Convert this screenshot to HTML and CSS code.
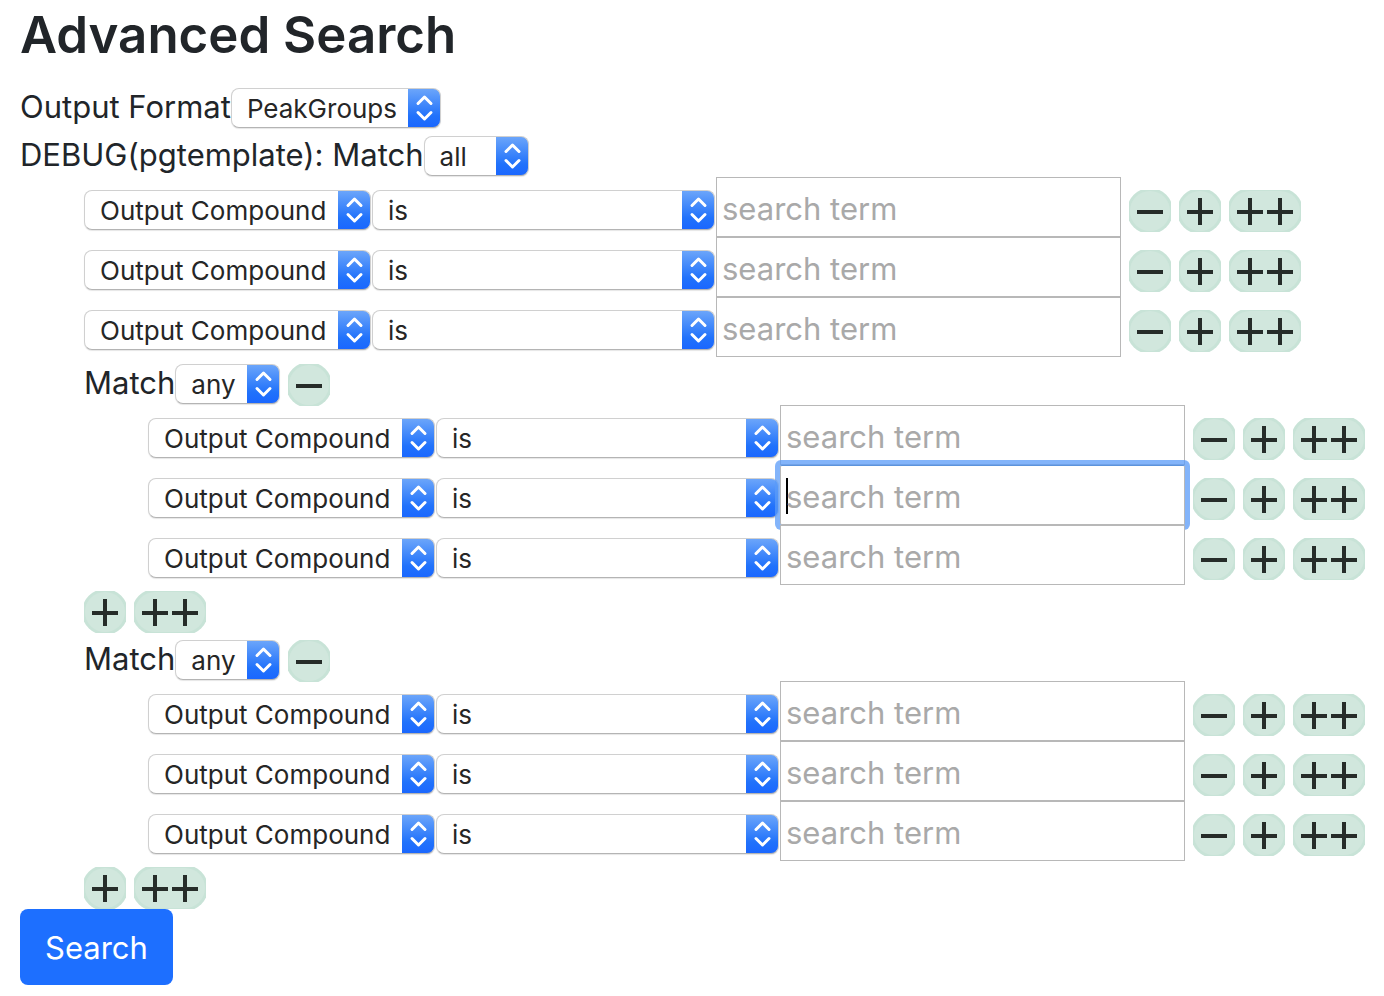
FILE: index.html
```html
<!DOCTYPE html>
<html lang="en">
<head>
    <meta charset="UTF-8">
    <meta name="viewport" content="width=device-width, initial-scale=1.0">
    <title>Advanced Search</title>
    <link rel="stylesheet" href="styles.css">
</head>
<body>
    <!-- button icons -->
    <svg class="icon-defs" aria-hidden="true">
        <symbol id="icon-minus" viewBox="0 0 42 42">
            <circle cx="21" cy="21" r="23" class="icon-edge"/>
            <circle cx="21" cy="21" r="20" class="icon-fill"/>
            <path d="M8 22H34" class="icon-line"/>
        </symbol>
        <symbol id="icon-plus" viewBox="0 0 42 42">
            <circle cx="21" cy="21" r="23" class="icon-edge"/>
            <circle cx="21" cy="21" r="20" class="icon-fill"/>
            <path d="M8 22H34M21 8V35" class="icon-line"/>
        </symbol>
        <symbol id="icon-plusplus" viewBox="0 0 72 42">
            <rect x="-2" y="-2" width="76" height="46" rx="23" class="icon-edge"/>
            <rect x="1" y="1" width="70" height="40" rx="20" class="icon-fill"/>
            <path d="M8 22H34M21 8V35M38 22H64M51 8V35" class="icon-line"/>
        </symbol>
    </svg>

    <h1>Advanced Search</h1>
    <form id="search-form">
        <div class="match-row first">
            <label for="format">Output Format</label>
            <select id="format" class="format"><option>PeakGroups</option><option>PeakData</option></select>
        </div>
        <div class="match-row">
            <label for="match-all">DEBUG(pgtemplate): Match</label>
            <select id="match-all" class="match"><option>all</option><option>any</option></select>
        </div>
        <div class="group">
            <div class="query">
                <select class="field" aria-label="Field"><option>Output Compound</option></select>
                <select class="compare" aria-label="Comparison"><option>is</option></select>
                <input type="text" class="term" placeholder="search term" aria-label="Search term">
                <div class="buttons">
                    <button type="button" aria-label="Remove"><svg><use href="#icon-minus"/></svg></button>
                    <button type="button" aria-label="Add"><svg><use href="#icon-plus"/></svg></button>
                    <button type="button" class="wide" aria-label="Add group"><svg><use href="#icon-plusplus"/></svg></button>
                </div>
            </div>
            <div class="query">
                <select class="field" aria-label="Field"><option>Output Compound</option></select>
                <select class="compare" aria-label="Comparison"><option>is</option></select>
                <input type="text" class="term" placeholder="search term" aria-label="Search term">
                <div class="buttons">
                    <button type="button" aria-label="Remove"><svg><use href="#icon-minus"/></svg></button>
                    <button type="button" aria-label="Add"><svg><use href="#icon-plus"/></svg></button>
                    <button type="button" class="wide" aria-label="Add group"><svg><use href="#icon-plusplus"/></svg></button>
                </div>
            </div>
            <div class="query">
                <select class="field" aria-label="Field"><option>Output Compound</option></select>
                <select class="compare" aria-label="Comparison"><option>is</option></select>
                <input type="text" class="term" placeholder="search term" aria-label="Search term">
                <div class="buttons">
                    <button type="button" aria-label="Remove"><svg><use href="#icon-minus"/></svg></button>
                    <button type="button" aria-label="Add"><svg><use href="#icon-plus"/></svg></button>
                    <button type="button" class="wide" aria-label="Add group"><svg><use href="#icon-plusplus"/></svg></button>
                </div>
            </div>

            <div class="subgroup">
                <div class="match-row">
                    <label for="match-1">Match</label>
                    <select id="match-1" class="match"><option>any</option><option>all</option></select>
                    <div class="buttons">
                        <button type="button" aria-label="Remove group"><svg><use href="#icon-minus"/></svg></button>
                    </div>
                </div>
                <div class="group">
                    <div class="query">
                        <select class="field" aria-label="Field"><option>Output Compound</option></select>
                        <select class="compare" aria-label="Comparison"><option>is</option></select>
                        <input type="text" class="term" placeholder="search term" aria-label="Search term">
                        <div class="buttons">
                            <button type="button" aria-label="Remove"><svg><use href="#icon-minus"/></svg></button>
                            <button type="button" aria-label="Add"><svg><use href="#icon-plus"/></svg></button>
                            <button type="button" class="wide" aria-label="Add group"><svg><use href="#icon-plusplus"/></svg></button>
                        </div>
                    </div>
                    <div class="query">
                        <select class="field" aria-label="Field"><option>Output Compound</option></select>
                        <select class="compare" aria-label="Comparison"><option>is</option></select>
                        <input type="text" class="term" placeholder="search term" aria-label="Search term" autofocus>
                        <div class="buttons">
                            <button type="button" aria-label="Remove"><svg><use href="#icon-minus"/></svg></button>
                            <button type="button" aria-label="Add"><svg><use href="#icon-plus"/></svg></button>
                            <button type="button" class="wide" aria-label="Add group"><svg><use href="#icon-plusplus"/></svg></button>
                        </div>
                    </div>
                    <div class="query">
                        <select class="field" aria-label="Field"><option>Output Compound</option></select>
                        <select class="compare" aria-label="Comparison"><option>is</option></select>
                        <input type="text" class="term" placeholder="search term" aria-label="Search term">
                        <div class="buttons">
                            <button type="button" aria-label="Remove"><svg><use href="#icon-minus"/></svg></button>
                            <button type="button" aria-label="Add"><svg><use href="#icon-plus"/></svg></button>
                            <button type="button" class="wide" aria-label="Add group"><svg><use href="#icon-plusplus"/></svg></button>
                        </div>
                    </div>
                </div>
                <div class="buttons group-buttons">
                    <button type="button" aria-label="Add"><svg><use href="#icon-plus"/></svg></button>
                    <button type="button" class="wide" aria-label="Add group"><svg><use href="#icon-plusplus"/></svg></button>
                </div>
            </div>

            <div class="subgroup">
                <div class="match-row">
                    <label for="match-2">Match</label>
                    <select id="match-2" class="match"><option>any</option><option>all</option></select>
                    <div class="buttons">
                        <button type="button" aria-label="Remove group"><svg><use href="#icon-minus"/></svg></button>
                    </div>
                </div>
                <div class="group">
                    <div class="query">
                        <select class="field" aria-label="Field"><option>Output Compound</option></select>
                        <select class="compare" aria-label="Comparison"><option>is</option></select>
                        <input type="text" class="term" placeholder="search term" aria-label="Search term">
                        <div class="buttons">
                            <button type="button" aria-label="Remove"><svg><use href="#icon-minus"/></svg></button>
                            <button type="button" aria-label="Add"><svg><use href="#icon-plus"/></svg></button>
                            <button type="button" class="wide" aria-label="Add group"><svg><use href="#icon-plusplus"/></svg></button>
                        </div>
                    </div>
                    <div class="query">
                        <select class="field" aria-label="Field"><option>Output Compound</option></select>
                        <select class="compare" aria-label="Comparison"><option>is</option></select>
                        <input type="text" class="term" placeholder="search term" aria-label="Search term">
                        <div class="buttons">
                            <button type="button" aria-label="Remove"><svg><use href="#icon-minus"/></svg></button>
                            <button type="button" aria-label="Add"><svg><use href="#icon-plus"/></svg></button>
                            <button type="button" class="wide" aria-label="Add group"><svg><use href="#icon-plusplus"/></svg></button>
                        </div>
                    </div>
                    <div class="query">
                        <select class="field" aria-label="Field"><option>Output Compound</option></select>
                        <select class="compare" aria-label="Comparison"><option>is</option></select>
                        <input type="text" class="term" placeholder="search term" aria-label="Search term">
                        <div class="buttons">
                            <button type="button" aria-label="Remove"><svg><use href="#icon-minus"/></svg></button>
                            <button type="button" aria-label="Add"><svg><use href="#icon-plus"/></svg></button>
                            <button type="button" class="wide" aria-label="Add group"><svg><use href="#icon-plusplus"/></svg></button>
                        </div>
                    </div>
                </div>
                <div class="buttons group-buttons">
                    <button type="button" aria-label="Add"><svg><use href="#icon-plus"/></svg></button>
                    <button type="button" class="wide" aria-label="Add group"><svg><use href="#icon-plusplus"/></svg></button>
                </div>
            </div>
        </div>
        <button type="submit" class="search-button">Search</button>
    </form>
</body>
</html>
```
FILE: styles.css
```css
* {
    box-sizing: border-box;
}
body {
    margin: 0;
    padding: 0 0 10px 20px;
    background-color: #fff;
    color: #212529;
    font-family: Inter, "Liberation Sans", sans-serif;
    font-size: 31px;
}
h1 {
    margin: 0 0 14px;
    font-size: 51px;
    font-weight: 600;
    line-height: 70px;
}
.icon-defs {
    position: absolute;
    width: 0;
    height: 0;
}
.icon-edge {
    fill: #c8e3d7;
}
.icon-fill {
    fill: #d1e7dd;
}
.icon-line {
    fill: none;
    stroke: #262c29;
    stroke-width: 4;
}

/* rows */
.match-row {
    display: flex;
    align-items: flex-start;
    height: 45px;
    padding-top: 4px;
}
.match-row.first {
    height: 48px;
}
.match-row label {
    line-height: 38px;
}
.match-row .buttons {
    margin-left: 8px;
}
.group {
    padding-left: 64px;
}
.subgroup {
    margin-top: 3px;
}
.query {
    display: flex;
    align-items: flex-start;
    gap: 1px;
    height: 60px;
}
.query select,
.query .buttons {
    margin-top: 13px;
}
.query .buttons {
    margin-left: 7px;
}
.group-buttons {
    padding-top: 6px;
}

/* controls */
select {
    appearance: none;
    flex: none;
    height: 40px;
    margin: 0;
    padding: 0 34px 0 15px;
    border: 1px solid #d0d0d0;
    border-bottom-color: #b4b4b4;
    border-radius: 8px;
    color: #262626;
    font-family: inherit;
    font-size: 26px;
    background-color: #fff;
    background-image: url("data:image/svg+xml,%3Csvg xmlns='http://www.w3.org/2000/svg' width='33' height='40' fill='none' stroke='white' stroke-width='3' stroke-linecap='round' stroke-linejoin='round'%3E%3Cpath d='M10 15.500L16.500 9L23 15.500M10 24.500L16.500 31L23 24.500'/%3E%3C/svg%3E"), linear-gradient(#6ea7fa, #2172fb 70%, #1a66ff);
    background-position: right center;
    background-repeat: no-repeat;
    background-size: 33px 40px;
    background-origin: border-box;
    box-shadow: 0 1px 1px rgba(0, 0, 0, 0.1);
}
.format {
    width: 210px;
}
.match {
    width: 105px;
}
.field {
    width: 287px;
}
.compare {
    width: 343px;
}
.term {
    width: 405px;
    height: 60px;
    padding: 6px 5px 4px;
    border: 1px solid #b8b8b8;
    border-radius: 0;
    background-color: #fff;
    color: #212529;
    font-family: inherit;
    font-size: 31px;
}
.term::placeholder {
    color: #a9a9a9;
    opacity: 1;
}
.term:focus {
    outline: none;
    border-top-color: #5c93dc;
    border-radius: 2px;
    box-shadow: 0 0 0 5px rgba(90, 155, 248, 0.75);
}
/* steady caret while the box is empty */
.term:focus:placeholder-shown {
    caret-color: transparent;
    background-image: linear-gradient(#000, #000);
    background-position: 5px 12px;
    background-repeat: no-repeat;
    background-size: 2px 36px;
}
.buttons {
    display: flex;
    gap: 8px;
}
.buttons button {
    width: 42px;
    height: 42px;
    padding: 0;
    border: none;
    background: none;
    cursor: pointer;
}
.buttons .wide {
    width: 72px;
}
.buttons svg {
    display: block;
    width: 100%;
    height: 100%;
}
.search-button {
    display: block;
    height: 76px;
    padding: 0 25px;
    border: none;
    border-radius: 8px;
    background-color: #1d6fff;
    color: #fff;
    font-family: inherit;
    font-size: 31px;
    cursor: pointer;
}
```
